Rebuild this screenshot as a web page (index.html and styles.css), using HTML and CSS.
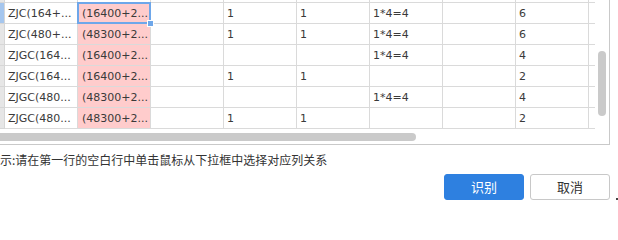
FILE: index.html
```html
<!DOCTYPE html>
<html>
<head>
<meta charset="utf-8">
<link rel="stylesheet" href="styles.css">
</head>
<body>
<div class="page">
  <div class="frame">
    <div class="viewport">
      <div class="row strip">
        <div class="hdr"></div><div class="c"></div><div class="c"></div><div class="c"></div><div class="c"></div><div class="c"></div><div class="c"></div><div class="c"></div><div class="c"></div><div class="c last"></div>
      </div>
      <div class="row">
        <div class="hdr active"></div><div class="c">ZJC(164+...</div><div class="c pink selected">(16400+2...</div><div class="c"></div><div class="c">1</div><div class="c">1</div><div class="c">1*4=4</div><div class="c"></div><div class="c">6</div><div class="c last"></div>
      </div>
      <div class="row">
        <div class="hdr"></div><div class="c">ZJC(480+...</div><div class="c pink">(48300+2...</div><div class="c"></div><div class="c">1</div><div class="c">1</div><div class="c">1*4=4</div><div class="c"></div><div class="c">6</div><div class="c last"></div>
      </div>
      <div class="row">
        <div class="hdr"></div><div class="c">ZJGC(164...</div><div class="c pink">(16400+2...</div><div class="c"></div><div class="c"></div><div class="c"></div><div class="c">1*4=4</div><div class="c"></div><div class="c">4</div><div class="c last"></div>
      </div>
      <div class="row">
        <div class="hdr"></div><div class="c">ZJGC(164...</div><div class="c pink">(16400+2...</div><div class="c"></div><div class="c">1</div><div class="c">1</div><div class="c"></div><div class="c"></div><div class="c">2</div><div class="c last"></div>
      </div>
      <div class="row">
        <div class="hdr"></div><div class="c">ZJGC(480...</div><div class="c pink">(48300+2...</div><div class="c"></div><div class="c"></div><div class="c"></div><div class="c">1*4=4</div><div class="c"></div><div class="c">4</div><div class="c last"></div>
      </div>
      <div class="row">
        <div class="hdr"></div><div class="c">ZJGC(480...</div><div class="c pink">(48300+2...</div><div class="c"></div><div class="c">1</div><div class="c">1</div><div class="c"></div><div class="c"></div><div class="c">2</div><div class="c last"></div>
      </div>
      <div class="hscroll"><div class="hthumb"></div></div>
    </div>
    <div class="vscroll"><div class="vthumb"></div></div>
  </div>
  <div class="hint">示:请在第一行的空白行中单击鼠标从下拉框中选择对应列关系</div>
  <div class="actions">
    <button class="btn primary">识别</button>
    <button class="btn">取消</button>
    <span class="grip"></span>
  </div>
</div>
</body>
</html>
```
FILE: styles.css
```css
html, body {
  margin: 0;
  padding: 0;
  background: #ffffff;
}
body {
  width: 618px;
  height: 202px;
  overflow: hidden;
  font-family: "DejaVu Sans", "Noto Sans CJK SC", sans-serif;
  font-size: 11px;
  color: #333333;
}
.page {
  display: flex;
  flex-direction: column;
}
.frame {
  display: flex;
  width: 609px;
  height: 144px;
  border-right: 1px solid #c9c9c9;
  border-bottom: 1px solid #c9c9c9;
}
.viewport {
  width: 595px;
  display: flex;
  flex-direction: column;
}
.row {
  display: grid;
  grid-template-columns: 5px repeat(8, 73px) 6px;
  height: 21px;
}
.row.strip {
  height: 3px;
}
.hdr {
  background: #e6e6e6;
  border-right: 1px solid #d6d6d6;
  border-bottom: 1px solid #d6d6d6;
}
.hdr.active {
  background: #a5c6ee;
}
.c {
  border-right: 1px solid #dadada;
  border-bottom: 1px solid #dadada;
  padding: 2px 0 0 3px;
  line-height: 18px;
  white-space: nowrap;
  overflow: hidden;
  color: #3a3a3a;
}
.c.last {
  border-right: none;
}
.c.pink {
  background: #ffcccc;
  padding-left: 4px;
}
.c.selected {
  position: relative;
  overflow: visible;
}
.c.selected::after {
  content: "";
  position: absolute;
  left: -1px;
  top: -1px;
  right: -1px;
  bottom: -1px;
  border: 2px solid #6ea7ea;
}
.c.selected::before {
  content: "";
  position: absolute;
  left: 70px;
  top: 18px;
  width: 5px;
  height: 5px;
  background: #6ea7ea;
  box-shadow: 0 0 0 1px #ffffff;
  z-index: 2;
}
.hscroll {
  height: 15px;
  padding-top: 4px;
  box-sizing: border-box;
}
.hthumb {
  width: 422px;
  height: 8px;
  margin-left: -6px;
  background: #cacaca;
  border-radius: 4px;
}
.vscroll {
  width: 14px;
  padding: 51px 0 0 3px;
  box-sizing: border-box;
}
.vthumb {
  width: 8px;
  height: 65px;
  background: #cacaca;
  border-radius: 4px;
}
.hint {
  margin-top: 7px;
  line-height: 16px;
  font-family: "Noto Sans CJK SC", sans-serif;
  font-size: 12px;
  color: #333333;
  white-space: nowrap;
}
.actions {
  display: flex;
  justify-content: flex-end;
  align-items: flex-start;
  gap: 6px;
  margin-top: 6px;
}
.btn {
  width: 80px;
  height: 26px;
  border-radius: 3px;
  border: 1px solid #c8c8c8;
  background: #ffffff;
  color: #333333;
  font-family: "Noto Sans CJK SC", sans-serif;
  font-size: 13px;
  padding: 0;
  line-height: 24px;
}
.btn.primary {
  background: #2e80e0;
  border-color: #2e80e0;
  color: #ffffff;
}
.grip {
  align-self: flex-end;
  width: 2px;
  height: 2px;
  background: #444444;
}
```
